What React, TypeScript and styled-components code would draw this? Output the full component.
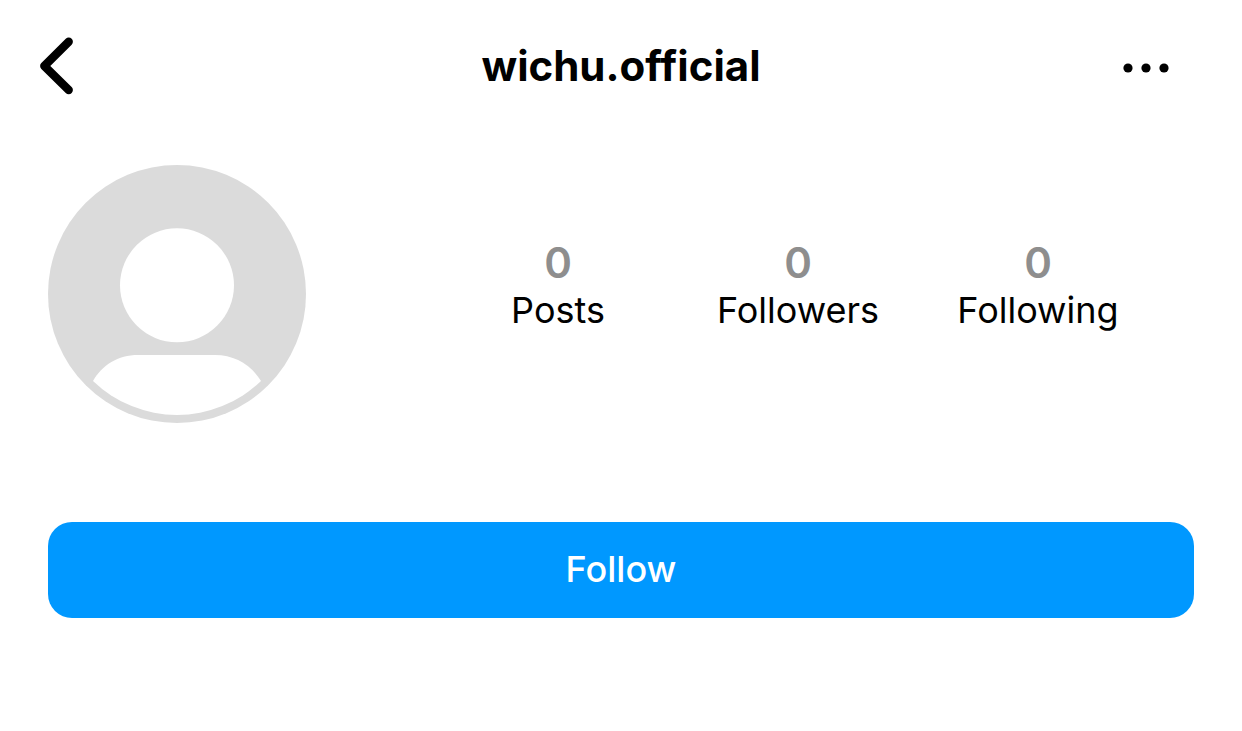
import styled, { createGlobalStyle } from "styled-components";

const GlobalStyle = createGlobalStyle`
  *, *::before, *::after { box-sizing: border-box; }
  body {
    margin: 0;
    background: #fff;
    color: #000;
    font-family: Inter, "Liberation Sans", sans-serif;
  }
`;

const Page = styled.main`
  display: flex;
  flex-direction: column;
  padding: 0 48px 112px;
`;

const Header = styled.header`
  display: grid;
  grid-template-columns: 1fr auto 1fr;
  align-items: center;
  height: 132px;
  margin: 0 -12px;
`;

const IconButton = styled.button<{ $align: "start" | "end" }>`
  justify-self: ${(p) => p.$align};
  display: flex;
  align-items: center;
  padding: 0;
  border: 0;
  background: none;
  color: inherit;
  cursor: pointer;
`;

const Username = styled.h1`
  margin: 0;
  font-size: 42px;
  line-height: 52px;
  font-weight: 700;
`;

const Profile = styled.section`
  display: flex;
  align-items: center;
  justify-content: space-between;
  gap: 132px;
  padding: 33px 36px 0 0;
`;

const Avatar = styled.svg`
  flex: none;
  width: 258px;
  height: 258px;
`;

const Stats = styled.dl`
  flex: 1;
  display: grid;
  grid-template-columns: repeat(3, 1fr);
  margin: 0;
  padding-bottom: 18px;
`;

const Stat = styled.div`
  display: flex;
  flex-direction: column-reverse;
  align-items: center;
`;

const StatLabel = styled.dt`
  font-size: 36px;
  line-height: 44px;
`;

const StatValue = styled.dd`
  margin: 0;
  color: #8e8e8e;
  font-size: 42px;
  line-height: 50px;
  font-weight: 600;
`;

const FollowButton = styled.button`
  height: 96px;
  margin-top: 99px;
  padding: 0 24px 2px;
  border: 0;
  border-radius: 24px;
  background: #0098ff;
  color: #fff;
  font-family: inherit;
  font-size: 36px;
  line-height: 44px;
  font-weight: 500;
  cursor: pointer;
`;

const stats = [
  { label: "Posts", value: 0 },
  { label: "Followers", value: 0 },
  { label: "Following", value: 0 },
];

export default function App() {
  return (
    <>
      <GlobalStyle />
      <Page>
        <Header>
          <IconButton $align="start" type="button" aria-label="Back">
            <svg width="42" height="60" viewBox="0 0 42 60" fill="none">
              <path
                d="M32.7 5.7 L8.3 30 L32.7 54.1"
                stroke="currentColor"
                strokeWidth="8.4"
                strokeLinecap="round"
                strokeLinejoin="round"
              />
            </svg>
          </IconButton>
          <Username>wichu.official</Username>
          <IconButton $align="end" type="button" aria-label="More options">
            <svg width="84" height="60" viewBox="0 0 84 60" fill="currentColor">
              <circle cx="6" cy="32" r="4.6" />
              <circle cx="24" cy="32" r="4.6" />
              <circle cx="42" cy="32" r="4.6" />
            </svg>
          </IconButton>
        </Header>
        <Profile>
          <Avatar viewBox="0 0 258 258" role="img" aria-label="Profile picture">
            <circle cx="129" cy="129" r="129" fill="#dbdbdb" />
            <circle cx="129" cy="120.3" r="57" fill="#fff" />
            <path
              d="M45 216 C54 200 70 190 90 190 H167 C187 190 203 200 213 216 A121 121 0 0 1 45 216 Z"
              fill="#fff"
            />
          </Avatar>
          <Stats>
            {stats.map((s) => (
              <Stat key={s.label}>
                <StatLabel>{s.label}</StatLabel>
                <StatValue>{s.value}</StatValue>
              </Stat>
            ))}
          </Stats>
        </Profile>
        <FollowButton type="button">Follow</FollowButton>
      </Page>
    </>
  );
}
